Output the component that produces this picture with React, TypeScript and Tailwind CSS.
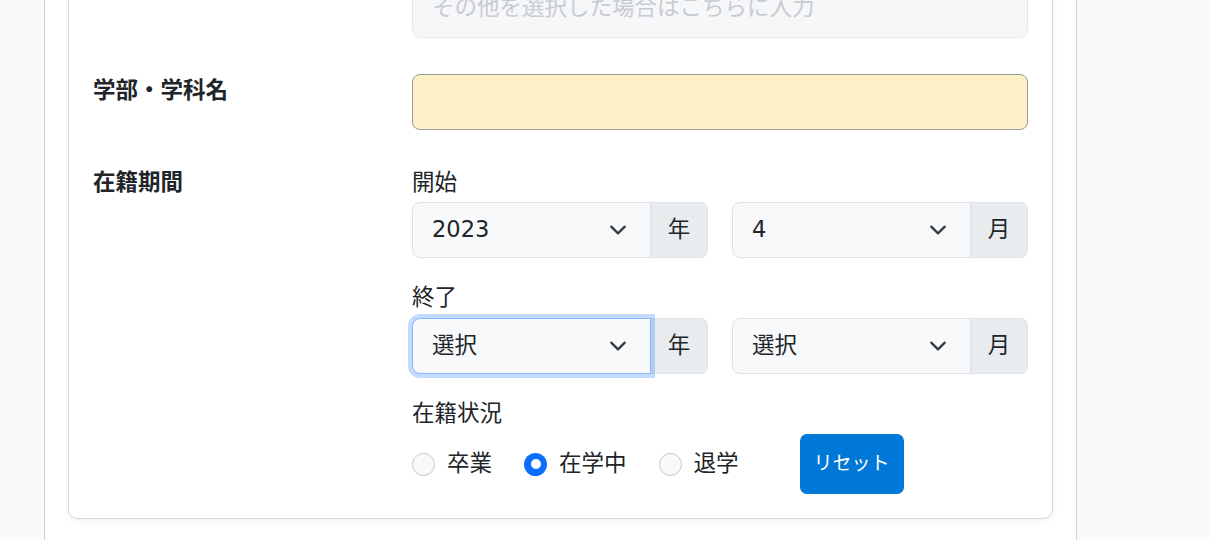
import React from "react";

const FONT = { fontFamily: '"DejaVu Sans", "Noto Sans CJK JP", sans-serif' };

function Chevron() {
  return (
    <svg width="18" height="18" viewBox="0 0 16 16" fill="none" className="shrink-0">
      <path d="m2 5 6 6 6-6" stroke="#343a40" strokeWidth="2" strokeLinecap="round" strokeLinejoin="round" />
    </svg>
  );
}

function SelectGroup({ value, unit, focused }: { value: string; unit: string; focused?: boolean }) {
  return (
    <div className="flex h-[56px] w-[296px]">
      <div
        className={
          focused
            ? "relative z-10 flex flex-1 items-center justify-between rounded-l-lg border border-[#86b7fe] bg-[#f8f9fa] pl-[19px] pr-[23px] shadow-[0_0_0_4px_rgba(13,110,253,0.25)]"
            : "flex flex-1 items-center justify-between rounded-l-lg border border-[#dee2e6] bg-[#f8f9fa] pl-[19px] pr-[23px]"
        }
      >
        <span className="pb-[2px]">{value}</span>
        <Chevron />
      </div>
      <div className="flex w-[57px] items-center justify-center rounded-r-lg border border-l-0 border-[#dee2e6] bg-[#e9ecef] pb-[2px]">
        {unit}
      </div>
    </div>
  );
}

function Radio({ label, checked }: { label: string; checked?: boolean }) {
  return (
    <label className="flex items-center gap-[12px]">
      {checked ? (
        <span className="flex h-[23px] w-[23px] items-center justify-center rounded-full bg-[#0d6efd]">
          <span className="h-[10px] w-[10px] rounded-full bg-white" />
        </span>
      ) : (
        <span className="h-[23px] w-[23px] rounded-full border border-[#c4c7ca] bg-[#f8f9fa]" />
      )}
      <span className="flex h-[33px] items-center pb-[2px]">{label}</span>
    </label>
  );
}

export default function App() {
  return (
    <div className="h-[540px] overflow-hidden bg-[#fafafa] text-[22.5px] leading-[33px] text-[#212529]" style={FONT}>
      <div className="ml-[44px] flex h-[540px] w-[1033px] flex-col border-x border-[#d2d2d2] bg-white px-[23px]">
        <div className="-mt-[43px] rounded-b-[10px] border border-[#d6d6d6] bg-white p-6 shadow-[0_2px_6px_rgba(0,0,0,0.06)]">
          <div className="flex flex-col gap-[36px]">
            <div className="grid grid-cols-[319px_1fr]">
              <div />
              <div className="flex h-[56px] items-center rounded-lg border border-[#e6e8eb] bg-[#f6f7f9] px-[19px] pb-[6px] text-[#c8ccd0]">
                その他を選択した場合はこちらに入力
              </div>
            </div>
            <div className="grid grid-cols-[319px_1fr]">
              <div className="h-[33px] font-bold">学部・学科名</div>
              <div className="h-[56px] rounded-lg border border-[#9c9c9c] bg-[#fdf0c6]" />
            </div>
            <div className="grid grid-cols-[319px_1fr]">
              <div className="h-[33px] font-bold">在籍期間</div>
              <div className="flex flex-col">
                <div className="mb-[3px] h-[33px]">開始</div>
                <div className="flex gap-[24px]">
                  <SelectGroup value="2023" unit="年" />
                  <SelectGroup value="4" unit="月" />
                </div>
                <div className="mb-[4px] mt-[23px] h-[33px]">終了</div>
                <div className="flex gap-[24px]">
                  <SelectGroup value="選択" unit="年" focused />
                  <SelectGroup value="選択" unit="月" />
                </div>
                <div className="mb-[4px] mt-[23px] h-[33px]">在籍状況</div>
                <div className="flex items-center">
                  <div className="flex items-center gap-[32px]">
                    <Radio label="卒業" />
                    <Radio label="在学中" checked />
                    <Radio label="退学" />
                  </div>
                  <button className="ml-[61px] flex h-[60px] w-[104px] items-center justify-center rounded-[7px] bg-[#0078d7] pb-[2px] text-[19px] text-white">
                    リセット
                  </button>
                </div>
              </div>
            </div>
          </div>
        </div>
      </div>
    </div>
  );
}
